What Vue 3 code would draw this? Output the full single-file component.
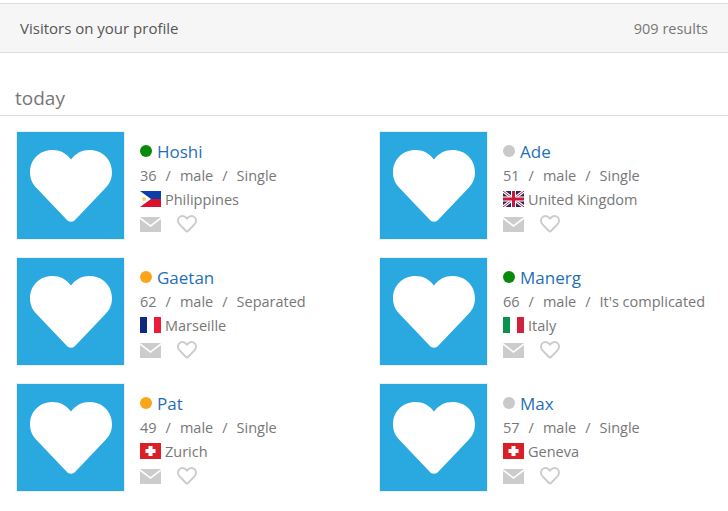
<script setup>
const visitors = [
  { name: 'Hoshi', status: 'online', age: 36, civil: 'Single', flag: 'ph', place: 'Philippines' },
  { name: 'Ade', status: 'offline', age: 51, civil: 'Single', flag: 'uk', place: 'United Kingdom' },
  { name: 'Gaetan', status: 'away', age: 62, civil: 'Separated', flag: 'fr', place: 'Marseille' },
  { name: 'Manerg', status: 'online', age: 66, civil: "It's complicated", flag: 'it', place: 'Italy' },
  { name: 'Pat', status: 'away', age: 49, civil: 'Single', flag: 'ch', place: 'Zurich' },
  { name: 'Max', status: 'offline', age: 57, civil: 'Single', flag: 'ch', place: 'Geneva' },
];
</script>

<template>
  <div class="page">
    <div class="header">
      <span class="title">Visitors on your profile</span>
      <span class="count">909 results</span>
    </div>
    <h2 class="day">today</h2>
    <div class="list">
      <div v-for="v in visitors" :key="v.name" class="card">
        <div class="photo">
          <svg width="84" height="74" viewBox="0 0 84 74">
            <path
              d="M42 10.5C37 4 31 1 23.500 1C10.500 1 1 10.500 1 23.500C1 30 3.500 35 8 39.500L37.500 70.500C40 73.500 44 73.500 46.500 70.500L76 39.500C80.500 35 83 30 83 23.500C83 10.500 73.500 1 60.500 1C53 1 47 4 42 10.500Z"
              fill="#fff"
            />
          </svg>
        </div>
        <div class="info">
          <div class="name-row">
            <span class="dot" :class="v.status"></span>
            <a class="name">{{ v.name }}</a>
          </div>
          <div class="meta">
            <span>{{ v.age }}</span><span class="sep">/</span><span>male</span><span class="sep">/</span><span class="civil">{{ v.civil }}</span>
          </div>
          <div class="place">
            <svg class="flag" width="21" height="16" viewBox="0 0 21 16">
              <template v-if="v.flag === 'ph'">
                <rect width="21" height="8" fill="#0d3fa8" />
                <rect y="8" width="21" height="8" fill="#d8112f" />
                <path d="M0 0L11 8L0 16Z" fill="#fff" />
                <circle cx="4" cy="8" r="2" fill="#f5d66a" />
              </template>
              <template v-else-if="v.flag === 'uk'">
                <rect width="21" height="16" fill="#27275f" />
                <path d="M0 0L21 16M21 0L0 16" stroke="#fff" stroke-width="3" />
                <path d="M0 0L21 16M21 0L0 16" stroke="#c8193a" stroke-width="1" />
                <path d="M10.500 0V16M0 8H21" stroke="#fff" stroke-width="5" />
                <path d="M10.500 0V16M0 8H21" stroke="#c8193a" stroke-width="3" />
              </template>
              <template v-else-if="v.flag === 'fr'">
                <rect width="7" height="16" fill="#0d2a80" />
                <rect x="7" width="7" height="16" fill="#fff" />
                <rect x="14" width="7" height="16" fill="#ee1c3c" />
              </template>
              <template v-else-if="v.flag === 'it'">
                <rect width="7" height="16" fill="#0b9149" />
                <rect x="7" width="7" height="16" fill="#fff" />
                <rect x="14" width="7" height="16" fill="#d2213c" />
              </template>
              <template v-else>
                <rect width="21" height="16" fill="#d92027" />
                <path d="M8.500 3H12.500V6H15.500V10H12.500V13H8.500V10H5.500V6H8.500Z" fill="#fff" />
              </template>
            </svg>
            <span>{{ v.place }}</span>
          </div>
          <div class="actions">
            <svg width="21" height="15" viewBox="0 0 21 15">
              <path d="M0 0H21L10.500 8Z" fill="#cccccc" />
              <path d="M0 2L10.500 10L21 2V15H0Z" fill="#cccccc" />
            </svg>
            <svg width="20" height="18" viewBox="0 0 20 18">
              <path
                d="M10 3.500C8.500 1.800 7 1 5.500 1C3 1 1 3 1 5.700C1 7.300 1.700 8.500 2.800 9.600L9 16C9.600 16.600 10.400 16.600 11 16L17.200 9.600C18.300 8.500 19 7.300 19 5.700C19 3 17 1 14.500 1C13 1 11.500 1.800 10 3.500Z"
                fill="none"
                stroke="#cccccc"
                stroke-width="2"
              />
            </svg>
          </div>
        </div>
      </div>
    </div>
  </div>
</template>

<style>
body {
  background: #fff;
}
</style>

<style scoped>
.page {
  width: 728px;
  height: 511px;
  padding-top: 3px;
  box-sizing: border-box;
  overflow: hidden;
  font-family: "Open Sans", sans-serif;
  color: #777;
}

.header {
  display: flex;
  justify-content: space-between;
  align-items: center;
  height: 48px;
  padding: 0 20px;
  background: #f6f6f6;
  border-top: 1px solid #ddd;
  border-bottom: 1px solid #ddd;
}

.title {
  font-size: 15px;
  color: #555;
}

.count {
  font-size: 14.500px;
  color: #777;
}

.day {
  margin: 0;
  height: 63px;
  padding: 32px 0 0 15px;
  box-sizing: border-box;
  font-size: 19px;
  font-weight: 400;
  line-height: 26px;
  color: #777;
  border-bottom: 1px solid #ddd;
}

.list {
  display: grid;
  grid-template-columns: 363px 349px;
  grid-auto-rows: 126px;
  padding: 15px 0 0 16px;
}

.card {
  display: flex;
  align-items: flex-start;
  min-width: 0;
}

.photo {
  flex: none;
  display: flex;
  align-items: center;
  justify-content: center;
  width: 109px;
  height: 109px;
  background: #2aa9e0;
  border: 1px solid #eee;
  box-sizing: border-box;
}

.info {
  flex: 1;
  min-width: 0;
  padding: 8px 0 0 15px;
}

.name-row {
  display: flex;
  align-items: center;
  gap: 5px;
  height: 24px;
}

.dot {
  width: 12px;
  height: 12px;
  border-radius: 50%;
}

.online {
  background: #0a8a0a;
}

.away {
  background: #fba51a;
}

.offline {
  background: #c9c9c9;
}

.name {
  font-size: 17px;
  color: #1f6fb8;
}

.meta {
  display: flex;
  height: 24px;
  align-items: center;
  font-size: 14.500px;
  white-space: nowrap;
}

.sep {
  margin: 0 9px;
}

.civil {
  max-width: 106px;
  overflow: hidden;
  text-overflow: ellipsis;
}

.place {
  display: flex;
  align-items: center;
  gap: 4px;
  height: 24px;
  font-size: 14.500px;
}

.actions {
  display: flex;
  align-items: center;
  gap: 16px;
  height: 26px;
  padding-left: 0;
}
</style>
